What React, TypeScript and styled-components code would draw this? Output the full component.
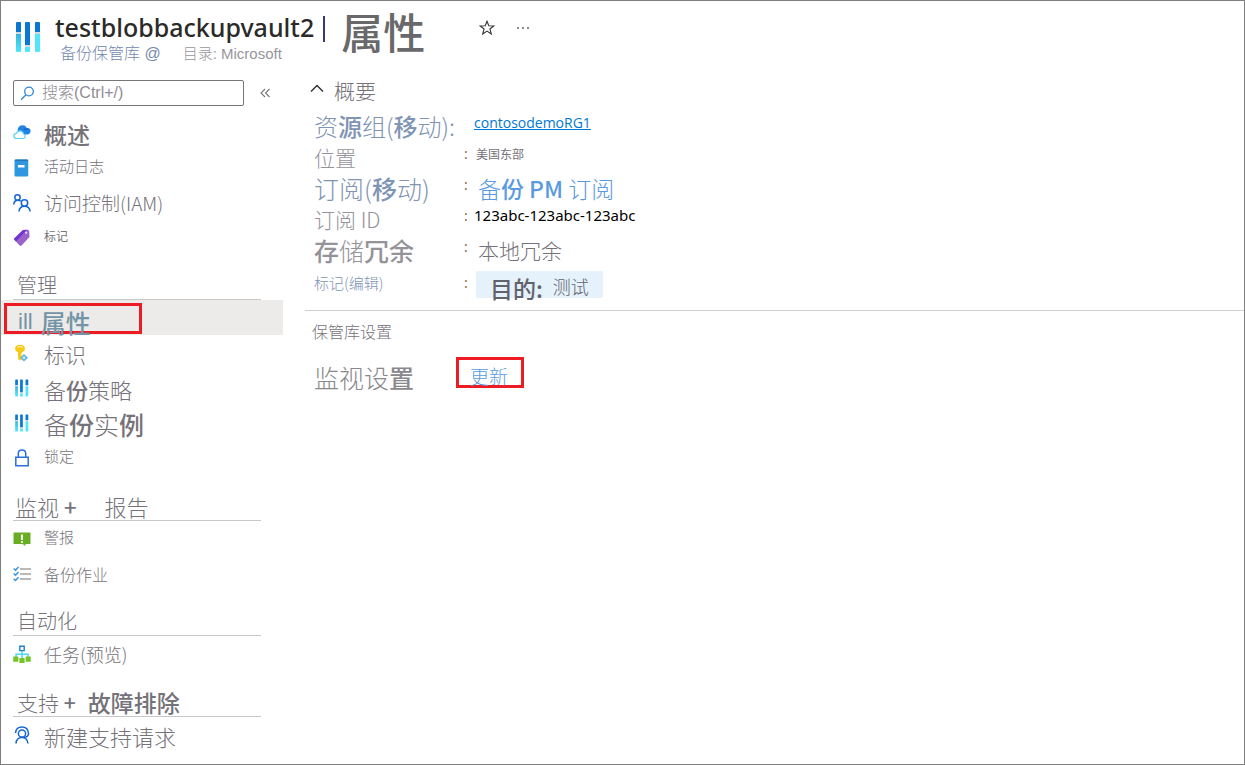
import React from "react";
import styled, { createGlobalStyle } from "styled-components";

const cjk = '"Noto Sans CJK SC", "Liberation Sans", sans-serif';
const latin = '"Noto Sans", "Noto Sans CJK SC", sans-serif';
const arial = '"Liberation Sans", "Noto Sans CJK SC", sans-serif';

const GlobalStyle = createGlobalStyle`
  *, *::before, *::after { box-sizing: border-box; }
  body { margin: 0; background: #fff; font-family: ${cjk}; font-weight: 300; color: #757279; }
  h1, h2, p, ul, dl, dd { margin: 0; padding: 0; font-weight: inherit; }
  a { color: inherit; text-decoration: none; }
  button { border: 0; padding: 0; background: none; color: #333; cursor: pointer; display: flex; align-items: center; justify-content: center; }
`;

const Page = styled.div`
  min-height: 100vh;
  border: 1px solid #7f7f7f;
`;

const Header = styled.header`
  display: flex;
  align-items: flex-start;
  height: 71px;
  padding-left: 14px;
`;

const Logo = styled.div`
  width: 26px;
  margin: 20px 14px 0 0;
  display: flex;
`;

const Titles = styled.div`
  display: flex;
  flex-direction: column;
  padding-top: 9px;
`;

const Title = styled.h1`
  font: 500 25px/34px ${latin};
  color: #2b2a29;
  white-space: nowrap;
`;

const Subtitle = styled.p`
  display: flex;
  gap: 22px;
  padding-left: 5px;
  font: 300 15px/20px ${arial};
  color: #97959c;
  white-space: nowrap;
`;

const SubtitleLink = styled.a`
  color: #7488ae;
  font-size: 16px;
`;

const Bar = styled.span`
  width: 2px;
  height: 26px;
  margin: 15px 16px 0 9px;
  background: #3b3a6e;
`;

const Section = styled.p`
  font: 500 42px/60px ${cjk};
  color: #69686b;
  white-space: nowrap;
`;

const HeaderButtons = styled.div`
  display: flex;
  gap: 20px;
  padding: 19px 0 0 54px;

  button { width: 16px; height: 16px; }
`;

const Body = styled.div`
  display: flex;
  align-items: flex-start;
`;

const Sidebar = styled.aside`
  flex: none;
  width: 282px;
  padding-top: 8px;
`;

const SearchRow = styled.div`
  display: flex;
  align-items: center;
  gap: 16px;
  margin: 0 0 9px 12px;
`;

const SearchBox = styled.label`
  display: flex;
  align-items: center;
  gap: 7px;
  width: 231px;
  height: 26px;
  padding-left: 6px;
  border: 1px solid #77757a;
  border-radius: 2px;
`;

const SearchInput = styled.input`
  flex: 1;
  min-width: 0;
  border: 0;
  padding: 0;
  outline: 0;
  background: transparent;
  font: 300 16px/22px ${arial};
  color: #605e5c;

  &::placeholder { color: #908d96; opacity: 1; }
`;

const NavHeading = styled.h2<{ $tall?: boolean; $indent?: boolean; $gap?: number }>`
  display: flex;
  align-items: flex-end;
  gap: ${(p) => p.$gap ?? 0}px;
  height: ${(p) => (p.$tall ? 46 : 45)}px;
  margin: 0 22px 0 12px;
  padding-left: ${(p) => (p.$indent ? 4 : 2)}px;
  border-bottom: 1px solid #c8c8c8;
  font-size: 20px;
  line-height: 28px;
`;

const NavItem = styled.a<{ $selected?: boolean }>`
  display: flex;
  align-items: center;
  gap: 13px;
  height: 35px;
  padding: ${(p) => (p.$selected ? "2px 0 0 3px" : "0 0 0 12px")};
  background: ${(p) => (p.$selected ? "#edebe9" : "transparent")};

  svg { flex: none; }
`;

const Label = styled.span<{ $size: number; $color?: string; $weight?: number }>`
  font-size: ${(p) => p.$size}px;
  line-height: 28px;
  font-weight: ${(p) => p.$weight ?? 300};
  color: ${(p) => p.$color ?? "inherit"};
  padding: ${(p) => (p.$size > 20 ? "3px 0 0" : p.$size < 16 ? "0 0 4px" : "0")};
  white-space: nowrap;
`;

const Strong = styled.span`
  font-weight: 500;
`;

const Highlight = styled.span<{ $width: number }>`
  display: flex;
  align-items: flex-start;
  gap: 8px;
  width: ${(p) => p.$width}px;
  height: 31px;
  padding: 2px 0 0 11px;
  border: 3px solid #ed1c24;

  > * { padding: 0; }
`;

const Bars = styled.span`
  font: 400 22px/28px ${arial};
  color: #7494a6;
`;

const Main = styled.main`
  flex: 1;
  min-width: 0;
  margin-left: 22px;
`;

const Overview = styled.div`
  display: flex;
  align-items: center;
  gap: 10px;
  height: 37px;
  padding: 0 0 5px 5px;
`;

const Properties = styled.dl`
  padding: 0 0 5px 9px;
`;

const Property = styled.div<{ $tall?: boolean }>`
  display: flex;
  align-items: center;
  height: ${(p) => (p.$tall ? 41 : 31)}px;
`;

const Term = styled.dt`
  flex: none;
  width: 150px;
  display: flex;
`;

const Detail = styled.dd<{ $gap?: number }>`
  display: flex;
  align-items: center;
  gap: ${(p) => p.$gap ?? 0}px;
`;

const Colon = styled.span`
  width: 10px;
  padding-bottom: 3px;
  font: 400 14px/20px ${latin};
  color: #8a6a4c;
`;

const ResourceLink = styled.a`
  padding-bottom: 3px;
  font: 400 14px/20px "Open Sans", sans-serif;
  color: #0078d4;
  text-decoration: underline;
`;

const PlainValue = styled.span`
  padding-bottom: 5px;
  font: 400 15px/20px ${latin};
  color: #000;
`;

const Tag = styled.span`
  display: flex;
  align-items: center;
  gap: 10px;
  height: 27px;
  padding: 3px 14px 0;
  border-radius: 2px;
  background: #e5f1fb;
  color: #63616b;
`;

const Settings = styled.section`
  border-top: 1px solid #d2d0ce;
  padding: 6px 0 0 7px;
`;

const SettingRow = styled.div`
  display: flex;
  align-items: center;
  padding: 9px 0 0 2px;
`;

const SettingName = styled.div`
  width: 142px;
  padding-top: 6px;
  display: flex;
`;

const BLUE = "#5a9bdf";
const LINK = "#8094b4";
const MUTED = "#95939a";

function VaultIcon({ large }: { large?: boolean }) {
  return (
    <svg
      width={large ? 26 : 18}
      height={large ? 32 : 18}
      viewBox={large ? "0 0 26 32" : "-3 0 33 32"}
      preserveAspectRatio="none"
      aria-hidden="true"
    >
      <defs>
        <linearGradient id="vaultCyan" x1="0" y1="0" x2="0" y2="1">
          <stop offset="0" stopColor="#32b7dc" />
          <stop offset="1" stopColor="#50e6ff" />
        </linearGradient>
      </defs>
      <path d="M1 2q0-1 1-1h3q1 0 1 1v9H1zM20 2q0-1 1-1h3q1 0 1 1v9h-5zM10 2q0-1 1-1h3q1 0 1 1v22h-5z" fill="#0a77d5" />
      <path d="M1 11h5v2H1zM20 11h5v2h-5zM10 24h5v2h-5z" fill="#d6d8dc" />
      <path d="M1 13h5v17q0 1-1 1H2q-1 0-1-1z" fill="url(#vaultCyan)" />
      <path d="M20 13h5v17q0 1-1 1h-3q-1 0-1-1zM10 26h5v4q0 1-1 1h-3q-1 0-1-1z" fill="#50e6ff" />
    </svg>
  );
}

const Icon = ({ children }: { children: React.ReactNode }) => (
  <svg width="18" height="18" viewBox="0 0 18 18" fill="none" aria-hidden="true">
    {children}
  </svg>
);

const CloudIcon = () => (
  <Icon>
    <path d="M5 7.500a4.600 4.600 0 0 1 8.800-3.300A3.200 3.200 0 0 1 17.600 7c0 2-1.500 3.500-3.300 3.500h-3C10.500 8 8 6.800 5 7.500z" fill="#2383e4" />
    <path d="M11 5.500c1.500-.8 3-.8 4.300.2" stroke="#1560bd" strokeWidth="1.200" />
    <path d="M3.500 14.500a2.600 2.600 0 0 1-.2-5.200 3.800 3.800 0 0 1 7.200.4 2.500 2.500 0 0 1-.2 4.800z" fill="#fff" stroke="#4fd3f0" strokeWidth="1.200" />
  </Icon>
);

const BookIcon = () => (
  <Icon>
    <path d="M3 1h12.500v16H3z" fill="#9cc3dc" />
    <path d="M2.500.5H14q1 0 1 1v15q0 1-1 1H2.500q-1 0-1-1v-15q0-1 1-1z" fill="#2f97df" />
    <path d="M2 2h13V1q0-.5-1-.5H3q-1 0-1 1z" fill="#2378b5" />
    <path d="M5 6h6.500v2.500H5z" fill="#fff" />
  </Icon>
);

const PeopleIcon = () => (
  <Icon>
    <g stroke="#1566d4" strokeWidth="1.500">
      <circle cx="4.500" cy="3.500" r="2.700" />
      <path d="M.7 10.500C1 7.500 2.500 6.300 5 6.300c1.200 0 2 .3 2.700.8" />
      <circle cx="11.500" cy="9" r="3.200" />
      <path d="M6 17.500c.3-3.500 2.500-5.200 5.500-5.200s5.200 1.700 5.700 5.200" />
    </g>
  </Icon>
);

const TagIcon = () => (
  <Icon>
    <path d="M10 1 15 .8l1.200 1.200.3 6-8 8.500q-.9.800-1.800 0L1.500 11q-.8-.9 0-1.800z" fill="#9b62c9" />
    <path d="M10 1 14 .8 3 12.500 1.500 11q-.8-.9 0-1.800z" fill="#7034d4" />
    <circle cx="13.200" cy="3.700" r="1.100" fill="#eadcf5" />
  </Icon>
);

const KeyIcon = () => (
  <Icon>
    <path d="M2 4.500Q2.300.7 7 .7t5 3.800Q12 7 9 8.300V9l-1 1 1 1-1 1 1 1v2l-2 1.500L5 15V8.300Q2 7 2 4.500z" fill="#f9c915" />
    <path d="M4.500 3.500q2.500-2 5 0" stroke="#fff3b8" strokeWidth="1.200" />
    <path d="m11 10 4 3.800-4 3.700-4-3.700z" fill="#5db5dd" />
    <path d="m11 12 1.800 1.800L11 15.500l-1.800-1.700z" fill="#c6eaf7" />
  </Icon>
);

const LockIcon = () => (
  <Icon>
    <path d="M2.800 8.200h12.400v8.600H2.800zM5.300 8V4.500Q5.300 1 9 1t3.700 3.500V8" stroke="#2a6ede" strokeWidth="1.500" />
  </Icon>
);

const AlertIcon = () => (
  <Icon>
    <path d="M1 2.500h16q.5 0 .5.500v10.500q0 .5-.5.500h-4.500v2l-3-2H1q-.5 0-.5-.5V3q0-.5.5-.5z" fill="#69ad22" />
    <path d="M9 4.500v5.300M9 11v1.800" stroke="#fff" strokeWidth="2" />
  </Icon>
);

const ChecklistIcon = () => (
  <Icon>
    <path d="m.7 3.500 1.800 1.700L5.500 2M.7 8.500l1.800 1.700 3-3.200M.7 13.700l1.800 1.700 3-3.200" stroke="#2f92e2" strokeWidth="1.400" />
    <path d="M7 4h11M7 9h11M7 14h11" stroke="#a3a3a3" strokeWidth="1.500" />
  </Icon>
);

const TasksIcon = () => (
  <Icon>
    <path d="M9 6v7M3 12V9.200h12V12" stroke="#4fd5ee" strokeWidth="1.500" />
    <path d="M6.800 1.200h4.400v4.400H6.800z" fill="#fff" stroke="#1b80d8" strokeWidth="1.400" />
    <path d="M.2 11.500h5.200v5.200H.2zM6.400 13h5.200v5.200H6.400zM12.600 11.500h5.200v5.200h-5.200z" fill="#76c32c" />
  </Icon>
);

const SupportIcon = () => (
  <Icon>
    <g stroke="#1566d4" strokeWidth="1.500">
      <circle cx="9" cy="7.500" r="3.600" />
      <path d="M2.500 7Q3 1 9 1t6.500 6.500q0 3.500-4.500 3.800M3 17.500c.3-4 2.500-6 6-6s5.500 2 6 6" />
    </g>
  </Icon>
);

export default function App() {
  return (
    <Page>
      <GlobalStyle />
      <Header>
        <Logo><VaultIcon large /></Logo>
        <Titles>
          <Title>testblobbackupvault2</Title>
          <Subtitle>
            <SubtitleLink href="#vault">备份保管库 @</SubtitleLink>
            <span>目录: Microsoft</span>
          </Subtitle>
        </Titles>
        <Bar />
        <Section>属性</Section>
        <HeaderButtons>
          <button aria-label="收藏">
            <svg width="16" height="16" viewBox="0 0 16 16" fill="none" stroke="#333" strokeWidth="1.100">
              <path d="m8 1.200 1.800 4.600 5 .2-3.900 3 1.400 4.900L8 11.100l-4.300 2.800L5.100 9 1.200 6l5-.2z" />
            </svg>
          </button>
          <button aria-label="更多">
            <svg width="14" height="4" viewBox="0 0 14 4" fill="#555">
              <circle cx="2" cy="2" r="0.900" /><circle cx="7" cy="2" r="0.900" /><circle cx="12" cy="2" r="0.900" />
            </svg>
          </button>
        </HeaderButtons>
      </Header>

      <Body>
        <Sidebar>
          <SearchRow>
            <SearchBox>
              <svg width="15" height="15" viewBox="0 0 15 15" fill="none" stroke="#2f86d6" strokeWidth="1.300" aria-hidden="true">
                <circle cx="9" cy="5.500" r="4.300" /><path d="m6 8.700-5 5" />
              </svg>
              <SearchInput placeholder="搜索(Ctrl+/)" aria-label="搜索" />
            </SearchBox>
            <button aria-label="折叠">
              <svg width="11" height="10" viewBox="0 0 11 10" fill="none" stroke="#777" strokeWidth="1.100">
                <path d="M5 1 1 5l4 4M9.500 1l-4 4 4 4" />
              </svg>
            </button>
          </SearchRow>

          <nav>
            <NavItem href="#overview"><CloudIcon /><Label $size={23} $weight={500}>概述</Label></NavItem>
            <NavItem href="#log"><BookIcon /><Label $size={15}>活动日志</Label></NavItem>
            <NavItem href="#iam"><PeopleIcon /><Label $size={19}>访问控制(IAM)</Label></NavItem>
            <NavItem href="#tags"><TagIcon /><Label $size={12} $weight={400}>标记</Label></NavItem>

            <NavHeading $indent>管理</NavHeading>
            <NavItem href="#properties" $selected>
              <Highlight $width={138}>
                <Bars>ill</Bars>
                <Label $size={25} $weight={500} $color="#7494a6">属性</Label>
              </Highlight>
            </NavItem>
            <NavItem href="#identity"><KeyIcon /><Label $size={21}>标识</Label></NavItem>
            <NavItem href="#policies"><VaultIcon /><Label $size={22}>备<Strong>份</Strong>策略</Label></NavItem>
            <NavItem href="#instances"><VaultIcon /><Label $size={25}>备<Strong>份</Strong>实<Strong>例</Strong></Label></NavItem>
            <NavItem href="#locks"><LockIcon /><Label $size={15}>锁定</Label></NavItem>

            <NavHeading $tall $gap={28}>
              <Label $size={22}>监视 <Strong>+</Strong></Label>
              <Label $size={22}>报告</Label>
            </NavHeading>
            <NavItem href="#alerts"><AlertIcon /><Label $size={15}>警报</Label></NavItem>
            <NavItem href="#jobs"><ChecklistIcon /><Label $size={16}>备份作业</Label></NavItem>

            <NavHeading $indent>自动化</NavHeading>
            <NavItem href="#tasks"><TasksIcon /><Label $size={18}>任务(预览)</Label></NavItem>

            <NavHeading $tall $indent $gap={12}>
              <Label $size={21}>支持 <Strong>+</Strong></Label>
              <Label $size={23} $weight={500}>故障排除</Label>
            </NavHeading>
            <NavItem href="#support"><SupportIcon /><Label $size={22}>新建支持请求</Label></NavItem>
          </nav>
        </Sidebar>

        <Main>
          <Overview>
            <button aria-label="折叠概要">
              <svg width="14" height="9" viewBox="0 0 14 9" fill="none" stroke="#333" strokeWidth="1.500">
                <path d="m1 7.500 6-6 6 6" />
              </svg>
            </button>
            <Label $size={21}>概要</Label>
          </Overview>
          <Properties>
            <Property>
              <Term><Label $size={24} $color={LINK}>资<Strong>源</Strong>组(<Strong>移</Strong>动):</Label></Term>
              <Detail><Colon /><ResourceLink href="#rg">contosodemoRG1</ResourceLink></Detail>
            </Property>
            <Property>
              <Term><Label $size={21} $color={MUTED}>位置</Label></Term>
              <Detail $gap={2}><Colon>:</Colon><Label $size={12} $weight={400}>美国东部</Label></Detail>
            </Property>
            <Property>
              <Term><Label $size={25} $color={LINK}>订阅(<Strong>移</Strong>动)</Label></Term>
              <Detail $gap={4}><Colon>:</Colon><Label as="a" href="#subscription" $size={23} $color={BLUE}>备<Strong>份</Strong> <Strong>PM</Strong> 订阅</Label></Detail>
            </Property>
            <Property>
              <Term><Label $size={21} $color={MUTED}>订阅 ID</Label></Term>
              <Detail><Colon>:</Colon><PlainValue>123abc-123abc-123abc</PlainValue></Detail>
            </Property>
            <Property>
              <Term><Label $size={25} $color={MUTED}><Strong>存</Strong>储<Strong>冗余</Strong></Label></Term>
              <Detail $gap={4}><Colon>:</Colon><Label $size={21}>本地冗余</Label></Detail>
            </Property>
            <Property $tall>
              <Term><Label as="a" href="#edit-tags" $size={15} $color={LINK}>标记(编辑)</Label></Term>
              <Detail $gap={2}>
                <Colon>:</Colon>
                <Tag><Label $size={23} $weight={500}>目的:</Label><Label $size={18}>测试</Label></Tag>
              </Detail>
            </Property>
          </Properties>
          <Settings>
            <Label as="h2" $size={16}>保管库设置</Label>
            <SettingRow>
              <SettingName><Label $size={25} $color="#8a888c">监视设<Strong>置</Strong></Label></SettingName>
              <Highlight $width={68}>
                <Label as="a" href="#update" $size={19} $color={BLUE}>更新</Label>
              </Highlight>
            </SettingRow>
          </Settings>
        </Main>
      </Body>
    </Page>
  );
}
